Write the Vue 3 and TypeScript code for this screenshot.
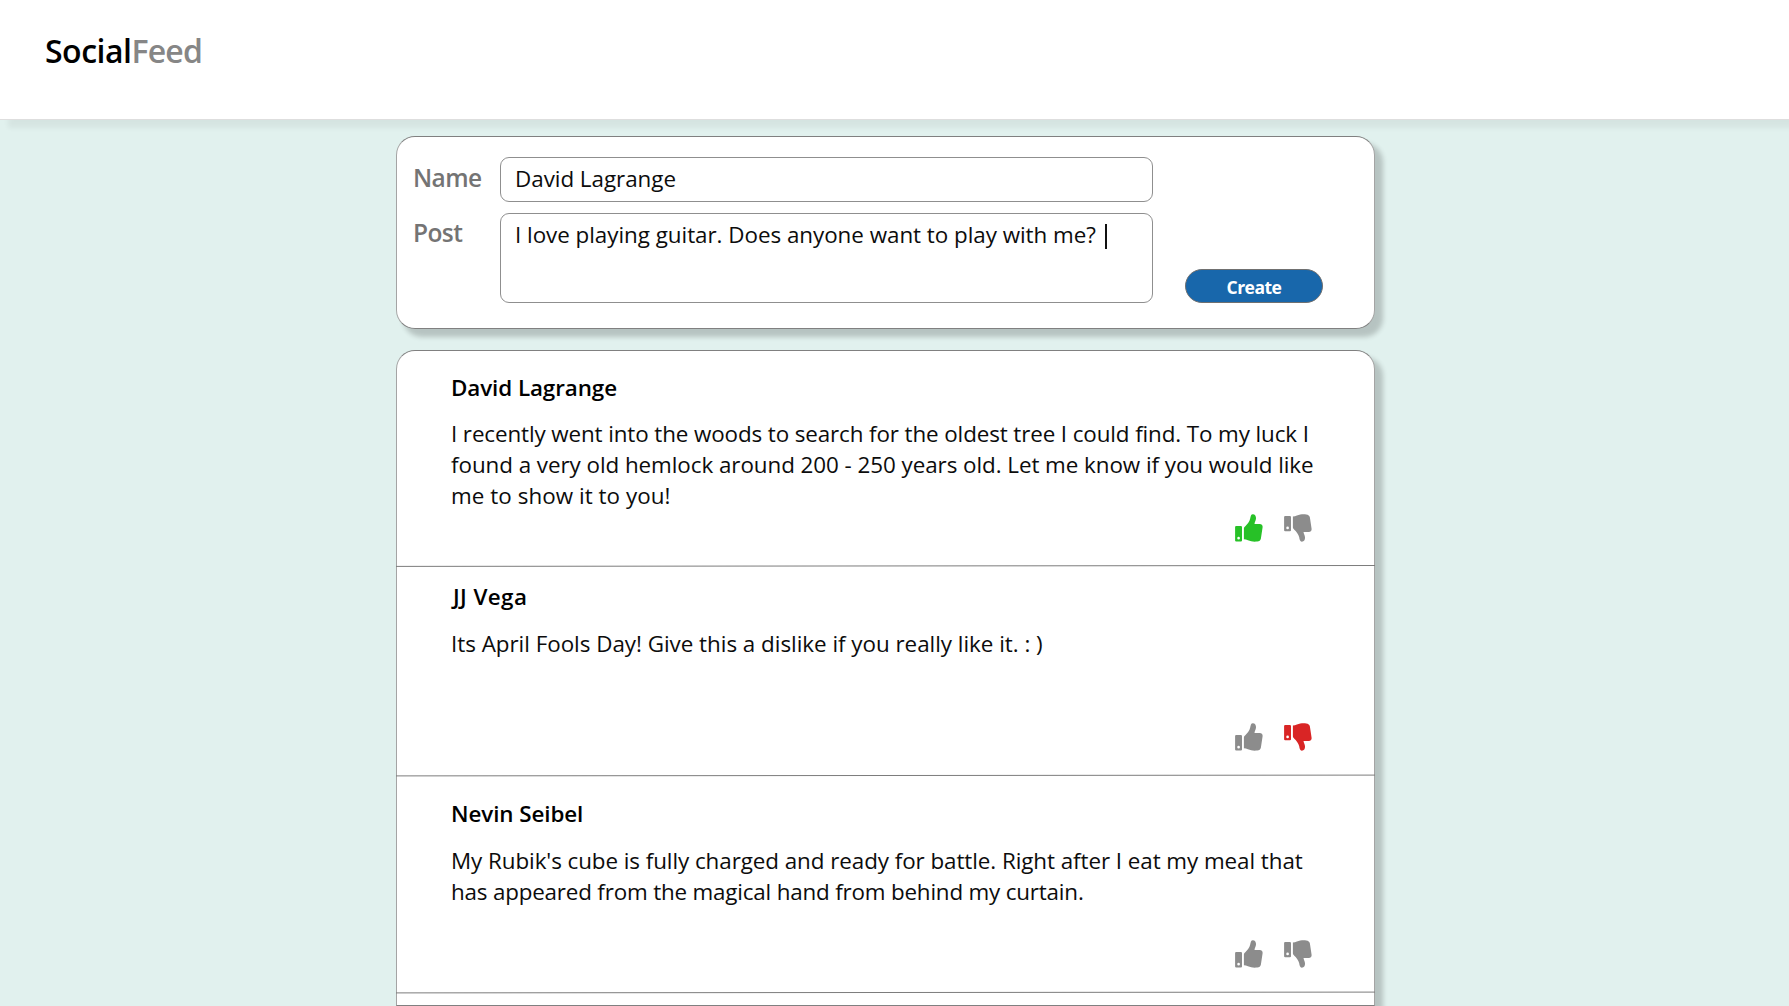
<script setup lang="ts">
import { ref } from 'vue'

type Vote = 'up' | 'down' | null

interface Line {
  text: string
  spacing: number
}

interface Post {
  author: string
  lines: Line[]
  vote: Vote
  size: 'first' | 'second' | 'third'
  rule: [number, number]
}

const name = ref('David Lagrange')
const draft = ref('I love playing guitar. Does anyone want to play with me? ')

const posts = ref<Post[]>([
  {
    author: 'David Lagrange',
    lines: [
      { text: 'I recently went into the woods to search for the oldest tree I could find. To my luck I', spacing: -0.11 },
      { text: 'found a very old hemlock around 200 - 250 years old. Let me know if you would like', spacing: -0.055 },
      { text: 'me to show it to you!', spacing: 0.05 },
    ],
    vote: 'up',
    size: 'first',
    rule: [1.4, 0.5],
  },
  {
    author: 'JJ Vega',
    lines: [
      { text: 'Its April Fools Day! Give this a dislike if you really like it. : )', spacing: -0.02 },
    ],
    vote: 'down',
    size: 'second',
    rule: [1.9, 1.1],
  },
  {
    author: 'Nevin Seibel',
    lines: [
      { text: "My Rubik's cube is fully charged and ready for battle. Right after I eat my meal that", spacing: -0.063 },
      { text: 'has appeared from the magical hand from behind my curtain.', spacing: -0.184 },
    ],
    vote: null,
    size: 'third',
    rule: [1.9, 1.1],
  },
])

function toggle(post: Post, vote: Vote) {
  post.vote = post.vote === vote ? null : vote
}
</script>

<template>
  <div class="page">
    <header class="header">
      <div class="logo"><span class="social">Social</span><span class="feed">Feed</span></div>
    </header>

    <main class="column">
      <section class="composer">
        <div class="labels">
          <span class="label">Name</span>
          <span class="label">Post</span>
        </div>
        <div class="fields">
          <div class="field name-field"><span>{{ name }}</span></div>
          <div class="field post-field"><span class="draft">{{ draft }}</span><i class="caret"></i></div>
        </div>
        <button class="create" type="button">Create</button>
      </section>

      <section class="list">
        <template v-for="post in posts" :key="post.author">
          <article class="post" :class="post.size">
            <h2 class="author">{{ post.author }}</h2>
            <div class="body">
              <div
                v-for="line in post.lines"
                :key="line.text"
                class="line"
                :style="{ letterSpacing: line.spacing + 'px' }"
              >{{ line.text }}</div>
            </div>
            <div class="votes">
              <svg class="thumb" :class="{ liked: post.vote === 'up' }" viewBox="0 0 28 28" @click="toggle(post, 'up')">
                <path
                  fill-rule="evenodd"
                  d="M1.2 12H5.9Q7 12 7 13.1V26.4Q7 27.5 5.9 27.5H1.2Q.1 27.5 .1 26.4V13.1Q.1 12 1.2 12ZM3.6 22.8a1.35 1.35 0 1 0 0 2.7a1.35 1.35 0 1 0 0-2.7Z"
                />
                <path d="M8.9 14.6C8.9 13.6 9.5 13 10.3 12.2C12.4 10.2 14.6 7.5 15.2 4.6C15.6 2.3 16 .2 17.8 .2C20 .2 21.2 2.1 21 4.6C20.8 6.8 19.7 8 19.5 9.9H24.6C26.8 9.9 27.9 11.3 27.6 13.2L25.9 24.4C25.5 26.5 24.3 27.2 22.2 27.5C18.6 27.9 15.8 27.4 12.9 26.3C11.5 25.8 10.4 25.4 8.9 25.3Z" />
              </svg>
              <svg class="thumb" :class="{ disliked: post.vote === 'down' }" viewBox="0 0 28 28" @click="toggle(post, 'down')">
                <path
                  fill-rule="evenodd"
                  d="M1.2 2H5.9Q7 2 7 3.1V16.2Q7 17.3 5.9 17.3H1.2Q.1 17.3 .1 16.2V3.1Q.1 2 1.2 2ZM3.6 12.6a1.35 1.35 0 1 0 0 2.7a1.35 1.35 0 1 0 0-2.7Z"
                />
                <path transform="matrix(1 0 0 -1 0 27.9)" d="M8.9 14.6C8.9 13.6 9.5 13 10.3 12.2C12.4 10.2 14.6 7.5 15.2 4.6C15.6 2.3 16 .2 17.8 .2C20 .2 21.2 2.1 21 4.6C20.8 6.8 19.7 8 19.5 9.9H24.6C26.8 9.9 27.9 11.3 27.6 13.2L25.9 24.4C25.5 26.5 24.3 27.2 22.2 27.5C18.6 27.9 15.8 27.4 12.9 26.3C11.5 25.8 10.4 25.4 8.9 25.3Z" />
              </svg>
            </div>
          </article>
          <svg class="rule" width="979" height="3" viewBox="0 0 979 3">
            <line x1="0" :y1="post.rule[0]" x2="979" :y2="post.rule[1]" />
          </svg>
        </template>
      </section>
    </main>
  </div>
</template>

<style>
body {
  background: #e1f1ee;
  overflow: hidden;
}
</style>

<style scoped>
.page {
  box-sizing: border-box;
  width: 100%;
  height: 1006px;
  overflow: hidden;
  background: #e1f1ee;
  color: #000;
  font-family: "Open Sans", "Noto Sans", sans-serif;
}
.header {
  box-sizing: border-box;
  height: 120px;
  padding: 28px 0 0 45px;
  background: #fff;
  border-bottom: 1px solid #dedede;
  box-shadow: 8px 8px 5px rgba(0, 0, 0, 0.05);
}
.logo {
  display: flex;
  font-size: 32px;
  line-height: 45px;
  font-weight: 600;
  letter-spacing: -0.5px;
}
.feed {
  color: #868686;
  letter-spacing: -0.8px;
}
.column {
  display: flex;
  flex-direction: column;
  gap: 21px;
  width: 979px;
  margin: 16px 0 0 396px;
}
.composer,
.list {
  box-sizing: border-box;
  background: #fff;
  border: 1px solid #808080;
  border-left-color: #a4a4a4;
  border-right-color: #a4a4a4;
  box-shadow: 7.5px 7.5px 5px rgba(0, 0, 0, 0.19);
}
.composer {
  display: flex;
  height: 193px;
  padding: 20px 0 0 16px;
  border-radius: 19px;
}
.labels {
  display: flex;
  flex-direction: column;
  gap: 21px;
  width: 87px;
  padding-top: 4px;
}
.label {
  color: #747474;
  font-size: 24.5px;
  line-height: 34px;
  font-weight: 600;
  letter-spacing: -0.6px;
}
.fields {
  display: flex;
  flex-direction: column;
  gap: 11px;
}
.field {
  box-sizing: border-box;
  display: flex;
  width: 653px;
  padding-left: 14px;
  border: 1px solid #8f8f8f;
  border-radius: 9px;
  color: #0c0c0c;
  font-size: 22.4px;
  line-height: 31px;
  font-weight: 400;
  white-space: pre;
}
.name-field {
  height: 45px;
  padding-top: 5px;
  letter-spacing: -0.03px;
}
.post-field {
  height: 90px;
  padding-top: 5px;
}
.draft {
  letter-spacing: -0.03px;
}
.caret {
  width: 2px;
  height: 25px;
  margin: 5px 0 0 3px;
  background: #111;
}
.create {
  box-sizing: border-box;
  width: 138px;
  height: 34px;
  margin: 112px 0 0 32px;
  padding: 2px 0 0;
  border: 1px solid #707070;
  border-radius: 17px;
  background: #1867ab;
  color: #fff;
  font-family: inherit;
  font-size: 17.5px;
  line-height: 30px;
  font-weight: 700;
  letter-spacing: -0.5px;
}
.list {
  height: 656px;
  border-radius: 19px 19px 0 0;
}
.post {
  box-sizing: border-box;
  position: relative;
  padding-left: 54px;
}
.first {
  height: 214px;
  padding-top: 21px;
}
.second {
  height: 206px;
  padding-top: 13px;
}
.third {
  height: 214px;
  padding-top: 21px;
}
.author {
  margin: 0 0 16px;
  font-size: 22.4px;
  line-height: 31px;
  font-weight: 600;
  letter-spacing: -0.08px;
}
.first .author {
  margin-bottom: 15px;
}
.second .author {
  padding-left: 2px;
  letter-spacing: 0.4px;
}
.body {
  color: #0c0c0c;
  font-size: 22.4px;
  font-weight: 400;
}
.line {
  line-height: 31px;
  white-space: nowrap;
}
.votes {
  position: absolute;
  right: 62px;
  bottom: 23px;
  display: flex;
  gap: 21.4px;
}
.thumb {
  width: 28px;
  height: 28px;
  fill: #8c8c8c;
}
.thumb.liked {
  fill: #27c127;
}
.thumb.disliked {
  fill: #d92525;
}
.rule {
  display: block;
  margin-left: -1px;
}
.rule line {
  stroke: #7c7c7c;
  stroke-width: 1;
}
</style>
